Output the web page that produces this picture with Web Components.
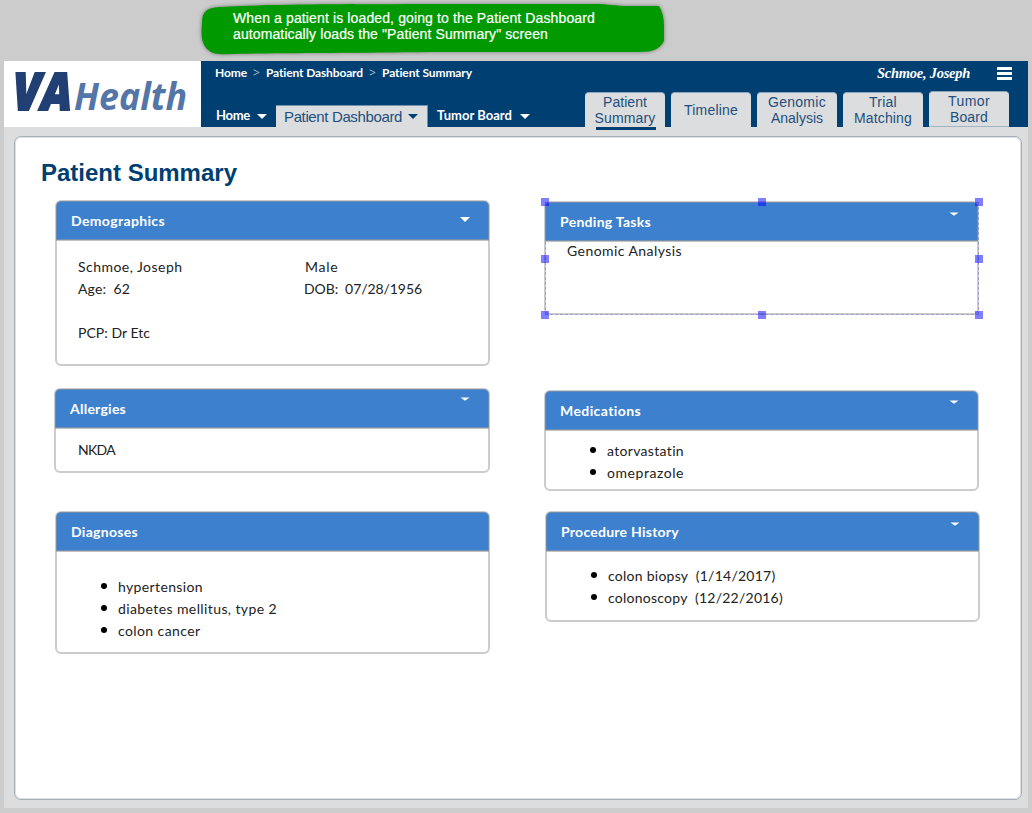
<!DOCTYPE html>
<html lang="en">
<head>
<meta charset="utf-8">
<title>Patient Summary</title>
<style>
html,body{margin:0;height:813px;overflow:hidden;background:#ccc;font-family:"Liberation Sans",Arial,sans-serif}
</style>
</head>
<body>
<patient-app></patient-app>
<script>
const component=(name,html,setup)=>{
  const t=document.createElement('template');t.innerHTML=html;
  customElements.define(name,class extends HTMLElement{
    constructor(){super();this.attachShadow({mode:'open'}).append(t.content.cloneNode(true));}
    connectedCallback(){if(setup)setup.call(this,this.shadowRoot);}
  });
};

component('patient-app',`
<style>
:host{display:block;width:1032px;height:813px;background:#ccc}
note-banner{height:61px}
.frame{margin:0 4px;height:747px;background:#dbddde;display:flex;flex-direction:column}
page-panel{margin:9px 6px 0 10px}
.cols{display:flex}
.left{width:435px;margin-left:40px}
.right{width:435px;margin-left:54px}
.split{display:flex}
.split>div{width:226px;flex:none}
.split .b{padding-left:1px;width:150px}
.b info-line:nth-child(2){margin-left:-1px}
</style>
<note-banner></note-banner>
<div class="frame">
<app-header></app-header>
<page-panel>
 <div class="cols">
  <div class="left">
   <info-card heading="Demographics" hw="94" caret="big" style="height:166px;--pt:15px">
     <div class="split"><div><info-line w="104.5">Schmoe, Joseph</info-line><info-line w="52">Age:  62</info-line><info-line></info-line><info-line w="72">PCP: Dr Etc</info-line></div>
     <div class="b"><info-line w="33.5">Male</info-line><info-line w="118">DOB:  07/28/1956</info-line></div></div>
   </info-card>
   <info-card heading="Allergies" hw="56" caret="small" style="height:85px;margin:22px 0 0 -1px;--pt:10px;--pl:23px;--cb:20px">
     <info-line w="37">NKDA</info-line>
   </info-card>
   <info-card heading="Diagnoses" hw="67" style="height:143px;margin-top:38px;--pt:24px;--pl:43px">
     <info-line bullet w="85">hypertension</info-line><info-line bullet w="159">diabetes mellitus, type 2</info-line><info-line bullet w="82.5">colon cancer</info-line>
   </info-card>
  </div>
  <div class="right">
   <info-card heading="Pending Tasks" hw="91" caret="small" style="height:114px;margin-top:1px;--pt:-1px;--pl:22px">
     <info-line w="115" style="margin-top:-2px">Genomic Analysis</info-line>
     <selection-box slot="overlay"></selection-box>
   </info-card>
   <info-card heading="Medications" hw="81" caret="small" style="height:101px;margin-top:75px;--pt:9px;--pl:43px;--cb:17px">
     <info-line bullet w="77">atorvastatin</info-line><info-line bullet w="77">omeprazole</info-line>
   </info-card>
   <info-card heading="Procedure History" hw="118" caret="small" style="height:111px;margin:20px -1px 0 1px;--pt:13px;--pl:43px">
     <info-line bullet w="167.5">colon biopsy  (1/14/2017)</info-line><info-line bullet w="175">colonoscopy  (12/22/2016)</info-line>
   </info-card>
  </div>
 </div>
</page-panel>
</div>`);

component('note-banner',`
<style>
:host{display:block;position:relative;color:#fff;font-size:14px;line-height:16px}
svg{position:absolute;left:195px;top:0;filter:drop-shadow(0 0 2px #777)}
.t{position:relative;padding:10px 0 0 233px;-webkit-text-stroke:.2px #fff}
fit-text{display:block}
</style>
<svg width="480" height="60"><path d="M7 23C7 11 12 8 24 7C90 3.500 150 4.500 240 4L400 4C413 4 420 6 434 6L464 6Q469 14 469 26V41C465 49 458 52 444 52L235 52C160 53 80 53 38 54C24 55 17 54 12 49C6 43 6 33 7 23Z" fill="#009a00"/></svg>
<div class="t"><fit-text w="362">When a patient is loaded, going to the Patient Dashboard</fit-text><fit-text w="315">automatically loads the "Patient Summary" screen</fit-text></div>`);

component('app-header',`
<style>
:host{display:flex;height:66px;background:#003f72;color:#fff;font-family:Lato,"Open Sans",sans-serif}
va-logo{width:197px}
.bar{flex:1;display:flex;flex-direction:column}
.top{display:flex;align-items:center;height:24px;padding:0 16px 0 14px;font-size:12px;font-weight:700}
.top>fit-text,.top>.sep{margin-top:-2px}
.sep{width:19px;text-align:center;color:#a6bccd;font:400 12px "Open Sans",sans-serif}
.user{margin-left:auto;margin-top:1px;font:italic 700 14.5px "Liberation Serif",serif}
.menu{display:block;margin-left:27px;margin-top:1px}
.bottom{display:flex;align-items:flex-end;height:42px}
.nav{display:flex;align-items:center;height:24px;font-size:13px;font-weight:700}
.nav svg{margin-left:7px;margin-top:2px}
.sel{box-sizing:border-box;width:152px;height:22px;margin-left:9px;padding-left:8px;background:#dbddde;color:#1f4f7d;font:400 15px "Liberation Sans",sans-serif;border:solid #6e93b0;border-width:1px 1px 0 0}
.sel svg{margin-left:6px;margin-top:0}
.tabs{display:flex;gap:6px;margin-left:55px}
</style>
<va-logo></va-logo>
<div class="bar">
<div class="top"><fit-text w="32">Home</fit-text><span class="sep">&gt;</span><fit-text w="97">Patient Dashboard</fit-text><span class="sep">&gt;</span><fit-text w="90">Patient Summary</fit-text><span class="user"><fit-text w="93">Schmoe, Joseph</fit-text></span><svg class="menu" width="15" height="13"><path d="M1 1.500H14M1 6.500H14M1 11.500H14" stroke="#fff" stroke-width="3" stroke-linecap="round"/></svg></div>
<div class="bottom">
<div class="nav" style="padding-left:15px"><fit-text w="34">Home</fit-text><svg width="10" height="5"><path d="M0 0H10L5 5Z" fill="#fff"/></svg></div>
<div class="nav sel"><fit-text w="118">Patient Dashboard</fit-text><svg width="10" height="5"><path d="M0 0H10L5 5Z" fill="#003f72"/></svg></div>
<div class="nav" style="padding-left:9px"><fit-text w="75">Tumor Board</fit-text><svg width="10" height="5" style="margin-left:8px"><path d="M0 0H10L5 5Z" fill="#fff"/></svg></div>
<div class="tabs"><nav-tab active><fit-text w="44">Patient</fit-text><fit-text w="61">Summary</fit-text></nav-tab><nav-tab><fit-text w="54">Timeline</fit-text></nav-tab><nav-tab><fit-text w="58">Genomic</fit-text><fit-text w="52">Analysis</fit-text></nav-tab><nav-tab><fit-text w="28">Trial</fit-text><fit-text w="58">Matching</fit-text></nav-tab><nav-tab raised><fit-text w="42">Tumor</fit-text><fit-text w="38">Board</fit-text></nav-tab></div>
</div></div>`);

component('nav-tab',`
<style>
:host{box-sizing:border-box;position:relative;display:flex;flex-direction:column;align-items:center;justify-content:center;align-self:flex-end;width:80px;height:35px;background:#dbddde;color:#1f4f7d;font:14px/16px "Liberation Sans",sans-serif;border-radius:4px 4px 0 0;border-top:1px solid #8ba6ba}
:host([raised]){height:36px;border-bottom:1px solid #9fb5c2;padding:0}
:host([active])::after{content:"";position:absolute;left:11px;top:34px;width:60px;height:3px;background:#003f72}
</style><slot></slot>`);

component('va-logo',`
<style>:host{display:block;background:#fff}svg{display:block;overflow:visible}text{font-family:"Open Sans","Noto Sans",sans-serif;font-style:italic;font-weight:700}.va{font-weight:800}</style>
<svg width="197" height="66">
<g fill="#213f72" stroke="#213f72" stroke-width="2"><text class="va" x="9" y="48.500" font-size="52" textLength="59" lengthAdjust="spacingAndGlyphs">VA</text></g>
<text x="70" y="49" font-size="37" fill="#5475a8" textLength="113" lengthAdjust="spacingAndGlyphs">Health</text>
</svg>`);

component('page-panel',`
<style>
:host{display:block;box-sizing:border-box;height:664px;background:#fff;border:1px solid #a3afb8;border-radius:7px;box-shadow:inset 0 0 0 1px #dde1e4}
h1{margin:0;height:63px;box-sizing:border-box;padding:22px 0 0 26px;font:700 24px/28px "Liberation Sans",sans-serif;color:#003f72}
</style><h1><fit-text w="196">Patient Summary</fit-text></h1><slot></slot>`);

component('info-card',`
<style>
:host{display:block;box-sizing:border-box;position:relative;padding:1px;font-family:Lato,sans-serif}
:host::after{content:"";position:absolute;inset:0;border:2px solid rgba(153,153,153,.5);border-radius:6px;pointer-events:none}
header{position:relative;display:flex;align-items:center;height:39px;background:#3d80cd;border-radius:5px 5px 0 0;color:#fff;font-size:14px;font-weight:700;padding-left:15px;box-sizing:border-box}
header::after{content:"";position:absolute;left:0;right:0;bottom:-1px;height:2px;background:rgba(153,153,153,.6)}
svg{margin:0 19px var(--cb,15px) auto}
svg.big{margin-bottom:3px}
.body{display:flow-root;padding-left:var(--pl,22px);color:#222;font-size:14px}
.body::before{content:"";display:block;margin-top:var(--pt)}
</style><header></header><div class="body"><slot></slot></div><slot name="overlay"></slot>`,function(r){
  const h=r.querySelector('header'),c=this.getAttribute('caret');
  h.innerHTML='<fit-text w="'+this.getAttribute('hw')+'">'+this.getAttribute('heading')+'</fit-text>'+(c==='big'?'<svg class="big" width="10" height="5"><path d="M0 0H10L5 5Z" fill="#fff"/></svg>':c?'<svg width="10" height="4"><path d="M.5 .5H9.500L5 3.800Z" fill="#fff"/></svg>':'');
});

component('info-line',`
<style>
:host{display:flex;align-items:center;height:22px}
i{display:none;width:6px;height:6px;border-radius:50%;background:#000;margin:0 11px 0 2px}
:host([bullet]) i{display:block}
</style><i></i><span></span>`,function(r){
  const f=document.createElement('fit-text');f.setAttribute('w',this.getAttribute('w')||0);
  f.textContent=this.textContent;r.querySelector('span').replaceWith(f);
});

component('selection-box',`
<style>
:host{position:absolute;inset:0;z-index:2}
.d{position:absolute;inset:.5px;border:1px dashed rgba(130,130,210,.6)}
b{position:absolute;width:8px;height:8px;background:rgba(0,0,255,.5)}
</style><div class="d"></div>`,function(r){
  for(const x of [-3,214,431])for(const y of [-3,54,110]){
    if(x===214&&y===54)continue;
    const b=document.createElement('b');b.style.left=x+'px';b.style.top=y+'px';r.append(b);
  }
});

/* Text set to a given measure by adjusting its tracking. */
component('fit-text',`<style>:host{display:block;white-space:pre}span{display:inline-block;font-kerning:normal}</style><span><slot></slot></span>`,function(r){
  const w=+this.getAttribute('w'),s=r.querySelector('span'),n=this.textContent.length;
  if(!w||!n)return;
  s.style.letterSpacing='0.001px';
  const nat=s.getBoundingClientRect().width;
  s.style.letterSpacing=((w-nat)/n)+'px';
  this.style.width=w+'px';
});
</script>
</body>
</html>
